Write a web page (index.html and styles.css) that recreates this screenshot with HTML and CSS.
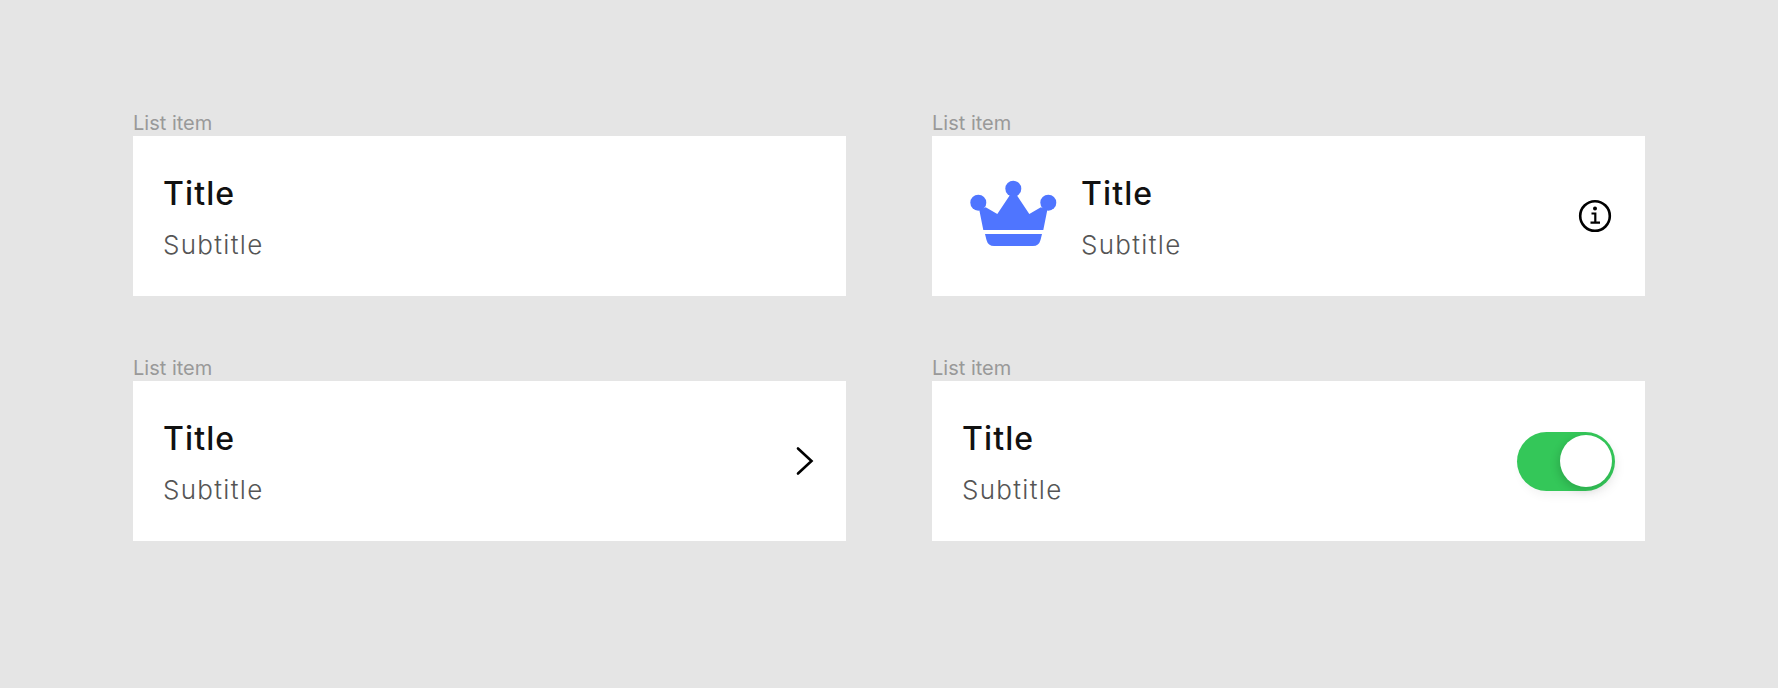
FILE: index.html
```html
<!DOCTYPE html>
<html lang="en">
<head>
  <meta charset="UTF-8">
  <title>List item</title>
  <link rel="stylesheet" href="styles.css">
</head>
<body>
  <div class="grid">
    <section>
      <div class="label">List item</div>
      <div class="item">
        <div class="text">
          <div class="title">Title</div>
          <div class="subtitle">Subtitle</div>
        </div>
      </div>
    </section>

    <section>
      <div class="label">List item</div>
      <div class="item">
        <svg class="crown" viewBox="0 0 102 96">
          <circle cx="16.3" cy="34.7" r="8"/>
          <circle cx="51.3" cy="20.7" r="8"/>
          <circle cx="86.3" cy="34.7" r="8"/>
          <path d="M17.3 42L23.7 39.3L35.3 46L51.3 22L67.3 46L78.9 39.3L85.3 42L81.3 62H21.3z"/>
          <path d="M23 66H80L78.5 72a8 8 0 0 1-8 6H32.5a8 8 0 0 1-8-6z"/>
        </svg>
        <div class="text">
          <div class="title">Title</div>
          <div class="subtitle">Subtitle</div>
        </div>
        <svg class="trail" viewBox="0 0 40 40">
          <circle cx="20" cy="20" r="14.8" fill="none" stroke="#000" stroke-width="2.6"/>
          <circle cx="20" cy="12.6" r="2" fill="#000"/>
          <path d="M16.5 17.5H20.3V26.5M15.5 26.6H25" fill="none" stroke="#000" stroke-width="2.2"/>
        </svg>
      </div>
    </section>

    <section>
      <div class="label">List item</div>
      <div class="item">
        <div class="text">
          <div class="title">Title</div>
          <div class="subtitle">Subtitle</div>
        </div>
        <svg class="trail" viewBox="0 0 40 40">
          <path d="M22 7.5L35.5 20L22 32.5" fill="none" stroke="#000" stroke-width="2.6" stroke-linecap="round" stroke-linejoin="miter"/>
        </svg>
      </div>
    </section>

    <section>
      <div class="label">List item</div>
      <div class="item">
        <div class="text">
          <div class="title">Title</div>
          <div class="subtitle">Subtitle</div>
        </div>
        <div class="toggle"><div class="knob"></div></div>
      </div>
    </section>
  </div>
</body>
</html>
```

FILE: styles.css
```css
body {
  margin: 0;
  height: 688px;
  overflow: hidden;
  background: #e5e5e5;
  font-family: "Inter", "Liberation Sans", sans-serif;
}
.grid {
  display: grid;
  grid-template-columns: 713px 713px;
  column-gap: 86px;
  row-gap: 59px;
  padding: 110px 0 0 133px;
}
.label {
  height: 26px;
  line-height: 26px;
  font-size: 20px;
  color: #999;
}
.item {
  display: flex;
  align-items: center;
  height: 160px;
  padding: 0 30px;
  background: #fff;
  box-sizing: border-box;
}
.text {
  flex: 1;
  padding-top: 2px;
}
.title {
  font-size: 32px;
  line-height: 40px;
  font-weight: 500;
  letter-spacing: 1.1px;
  color: #111;
}
.subtitle {
  margin-top: 15px;
  font-size: 26px;
  line-height: 32px;
  font-weight: 300;
  letter-spacing: 1.3px;
  color: #555;
}
.crown {
  width: 102px;
  height: 96px;
  margin-right: 17px;
  fill: #4f75ff;
}
.trail {
  width: 40px;
  height: 40px;
}
.toggle {
  display: flex;
  justify-content: flex-end;
  align-items: center;
  width: 98px;
  height: 59px;
  padding-right: 3px;
  background: #34c759;
  border-radius: 30px;
  box-sizing: border-box;
  box-shadow: 3px 5px 10px rgba(0,0,0,0.05);
}
.knob {
  width: 52px;
  height: 52px;
  background: #fff;
  border-radius: 50%;
  box-shadow: -2px 3px 8px rgba(0,0,0,0.15);
}
```
